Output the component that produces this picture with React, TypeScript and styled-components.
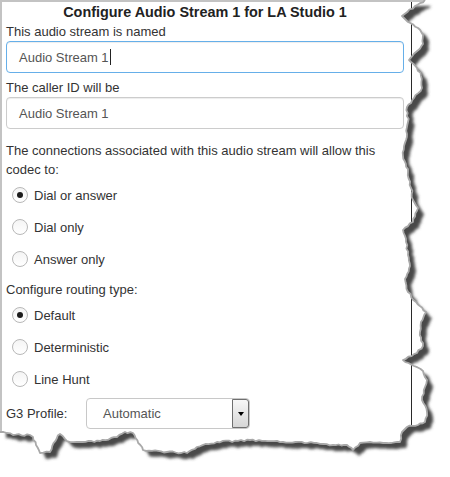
import React from "react";
import styled, { createGlobalStyle } from "styled-components";

const GlobalStyle = createGlobalStyle`
  html, body { margin: 0; padding: 0; background: #fff; }
  body {
    font-family: "Liberation Sans", Arial, sans-serif;
    font-size: 13px;
    color: #333;
  }
`;

const Page = styled.div`
  position: relative;
  width: 450px;
  height: 477px;
  overflow: hidden;
  background: #fff;
`;

const Frame = styled.div`
  box-sizing: border-box;
  width: 450px;
  height: 477px;
  border-top: 2px solid #c3c3c3;
  border-left: 2px solid #c3c3c3;
`;

const Dialog = styled.div`
  box-sizing: border-box;
  width: 410px;
  height: 460px;
  border-right: 1px solid #2a2a2a;
  padding: 0 7px 0 4px;
  display: flex;
  flex-direction: column;
`;

const Title = styled.h1`
  margin: 0;
  font-size: 14.4px;
  font-weight: bold;
  line-height: 20px;
  text-align: center;
  color: #222;
`;

const Label = styled.div<{ $mt?: number }>`
  line-height: 19px;
  margin-top: ${(p) => p.$mt ?? 0}px;
`;

const TextBox = styled.div<{ $focused?: boolean }>`
  box-sizing: border-box;
  flex: none;
  height: 32px;
  width: 100%;
  border: 1px solid ${(p) => (p.$focused ? "#66afe9" : "#cccccc")};
  border-radius: 4px;
  padding: 0 12px;
  display: flex;
  align-items: center;
  color: #555;
  box-shadow: inset 0 1px 1px rgba(0, 0, 0, 0.075);
`;

const Caret = styled.span`
  display: inline-block;
  width: 1px;
  height: 16px;
  margin-left: 1px;
  background: #222;
`;

const Group = styled.div`
  display: flex;
  flex-direction: column;
`;

const RadioRow = styled.label`
  height: 32px;
  display: flex;
  align-items: center;
  gap: 6px;
  padding-left: 6px;
`;

const RadioDot = styled.span<{ $checked?: boolean }>`
  box-sizing: border-box;
  position: relative;
  width: 16px;
  height: 16px;
  border-radius: 50%;
  border: 1px solid #b8b8b8;
  background: linear-gradient(#f4f4f4, #ffffff);
  &::after {
    content: "";
    display: ${(p) => (p.$checked ? "block" : "none")};
    position: absolute;
    left: 4px;
    top: 4px;
    width: 6px;
    height: 6px;
    border-radius: 50%;
    background: #1c1c1c;
  }
`;

const SelectRow = styled.div`
  margin-top: 3px;
  display: flex;
  align-items: center;
`;

const SelectLabel = styled.span`
  width: 80px;
`;

const SelectBox = styled.div`
  box-sizing: border-box;
  width: 164px;
  height: 31px;
  border: 1px solid #c8c8c8;
  border-radius: 4px;
  display: flex;
  align-items: center;
  padding-left: 16px;
  color: #555;
`;

const SelectText = styled.span`
  flex: 1;
`;

const DropButton = styled.span`
  box-sizing: border-box;
  width: 17px;
  height: 29px;
  border: 1px solid #6f6f6f;
  border-radius: 0 3px 3px 0;
  background: linear-gradient(#f7f7f7, #d6d6d6);
  display: flex;
  align-items: center;
  justify-content: center;
  &::after {
    content: "";
    width: 0;
    height: 0;
    border-left: 3.5px solid transparent;
    border-right: 3.5px solid transparent;
    border-top: 4px solid #000;
  }
`;

const Overlay = styled.svg`
  position: absolute;
  left: 0;
  top: 0;
  pointer-events: none;
`;

type Pt = [number, number];

const edge: Pt[] = [
  [425, 0], [415, 6], [402, 16], [408, 22], [418, 28], [423, 35], [423, 44],
  [416, 52], [409, 60], [417, 68], [421, 76], [422, 88], [414, 98], [407, 107],
  [408, 122], [406, 140], [403, 156], [408, 172], [411, 188], [413, 200],
  [418, 208], [413, 222], [403, 230], [406, 242], [408, 255], [410, 266],
  [405, 279], [408, 292], [416, 302], [426, 312], [421, 322], [420, 332],
  [423, 346], [417, 353], [403, 360], [414, 366], [423, 371], [427, 380],
  [425, 387], [422, 400], [427, 412], [425, 422], [418, 425], [407, 427],
  [402, 432], [400, 442], [383, 443], [370, 442], [360, 443], [353, 450],
  [347, 445], [333, 445], [317, 443], [283, 442], [250, 440], [217, 442],
  [197, 447], [187, 453], [167, 452], [143, 450], [133, 433], [125, 432],
  [117, 437], [100, 441], [77, 442], [67, 441], [60, 434], [57, 438],
  [50, 452], [40, 453], [36, 445], [33, 437], [30, 435], [13, 435], [7, 433],
  [0, 432],
];

function roughen(pts: Pt[], seed = 11): Pt[] {
  let s = seed;
  const rnd = () => {
    s = (s * 16807) % 2147483647;
    return s / 2147483647 - 0.5;
  };
  const out: Pt[] = [];
  for (let i = 0; i < pts.length - 1; i++) {
    const [x0, y0] = pts[i];
    const [x1, y1] = pts[i + 1];
    const len = Math.hypot(x1 - x0, y1 - y0) || 1;
    const n = Math.max(1, Math.round(len / 3));
    const nx = -(y1 - y0) / len;
    const ny = (x1 - x0) / len;
    for (let k = 0; k < n; k++) {
      const t = k / n;
      const j = k === 0 ? 0 : rnd() * 1.8;
      out.push([x0 + (x1 - x0) * t + nx * j, y0 + (y1 - y0) * t + ny * j]);
    }
  }
  out.push(pts[pts.length - 1]);
  return out;
}

const TornEdge: React.FC = () => {
  const pts = roughen(edge);
  const edgeD = "M" + pts.map(([x, y]) => `${x.toFixed(1)} ${y.toFixed(1)}`).join(" L");
  const paperD = `M0 0 L${edgeD.slice(1)} Z`;
  const outsideD = `M0 0 H450 V477 H0 Z ${paperD}`;
  return (
    <Overlay width={450} height={477} viewBox="0 0 450 477">
      <defs>
        <filter id="tornBlur" x="-10%" y="-10%" width="130%" height="130%">
          <feGaussianBlur stdDeviation="1.6" />
        </filter>
        <clipPath id="tornOutside">
          <path d={outsideD} clipRule="evenodd" />
        </clipPath>
      </defs>
      <path d={outsideD} fill="#fff" fillRule="evenodd" />
      <g clipPath="url(#tornOutside)">
        <path d={paperD} fill="#484848" transform="translate(6 6)" filter="url(#tornBlur)" />
      </g>
      <path d={edgeD} fill="none" stroke="#a9a9a9" strokeWidth={1.8} strokeLinejoin="round" />
    </Overlay>
  );
};

const Radio: React.FC<{ label: string; checked?: boolean }> = ({ label, checked }) => (
  <RadioRow>
    <RadioDot $checked={checked} />
    <span>{label}</span>
  </RadioRow>
);

export default function App() {
  return (
    <Page>
      <GlobalStyle />
      <Frame>
        <Dialog>
          <Title>Configure Audio Stream 1 for LA Studio 1</Title>
          <Label>This audio stream is named</Label>
          <TextBox $focused>
            Audio Stream 1<Caret />
          </TextBox>
          <Label $mt={5}>The caller ID will be</Label>
          <TextBox>Audio Stream 1</TextBox>
          <Label $mt={12}>
            The connections associated with this audio stream will allow this codec to:
          </Label>
          <Group>
            <Radio label="Dial or answer" checked />
            <Radio label="Dial only" />
            <Radio label="Answer only" />
          </Group>
          <Label $mt={5}>Configure routing type:</Label>
          <Group>
            <Radio label="Default" checked />
            <Radio label="Deterministic" />
            <Radio label="Line Hunt" />
          </Group>
          <SelectRow>
            <SelectLabel>G3 Profile:</SelectLabel>
            <SelectBox>
              <SelectText>Automatic</SelectText>
              <DropButton />
            </SelectBox>
          </SelectRow>
        </Dialog>
      </Frame>
      <TornEdge />
    </Page>
  );
}
